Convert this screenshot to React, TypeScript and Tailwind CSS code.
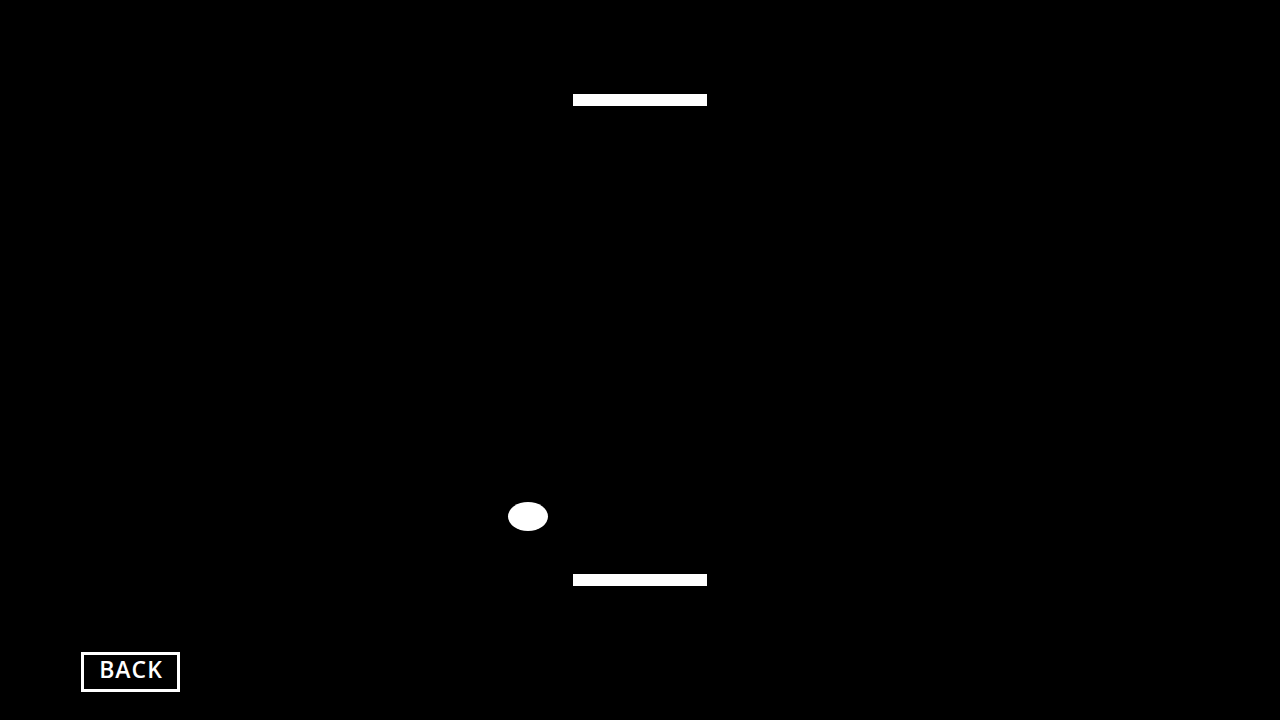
// Pong screen - paddles, ball and a back button on a black field
const App = () => {
  return (
    <div className="relative w-[1280px] h-[720px] bg-black overflow-hidden" style={{ fontFamily: '"Open Sans", "Noto Sans", sans-serif' }}>
      {/* Top paddle */}
      <div className="absolute left-[573px] top-[94px] w-[134px] h-[12px] bg-white" />

      {/* Ball */}
      <div className="absolute left-[508px] top-[502px] w-[40px] h-[29px] rounded-[50%] bg-white" />

      {/* Bottom paddle */}
      <div className="absolute left-[573px] top-[574px] w-[134px] h-[12px] bg-white" />

      {/* Back button */}
      <button className="absolute left-[81px] top-[652px] w-[99px] h-[40px] border-[3px] border-white bg-black text-white text-[23px] font-semibold tracking-[1px] leading-none flex items-center justify-center pb-[5px] pl-[1px]">
        BACK
      </button>
    </div>
  );
};

export default App;
